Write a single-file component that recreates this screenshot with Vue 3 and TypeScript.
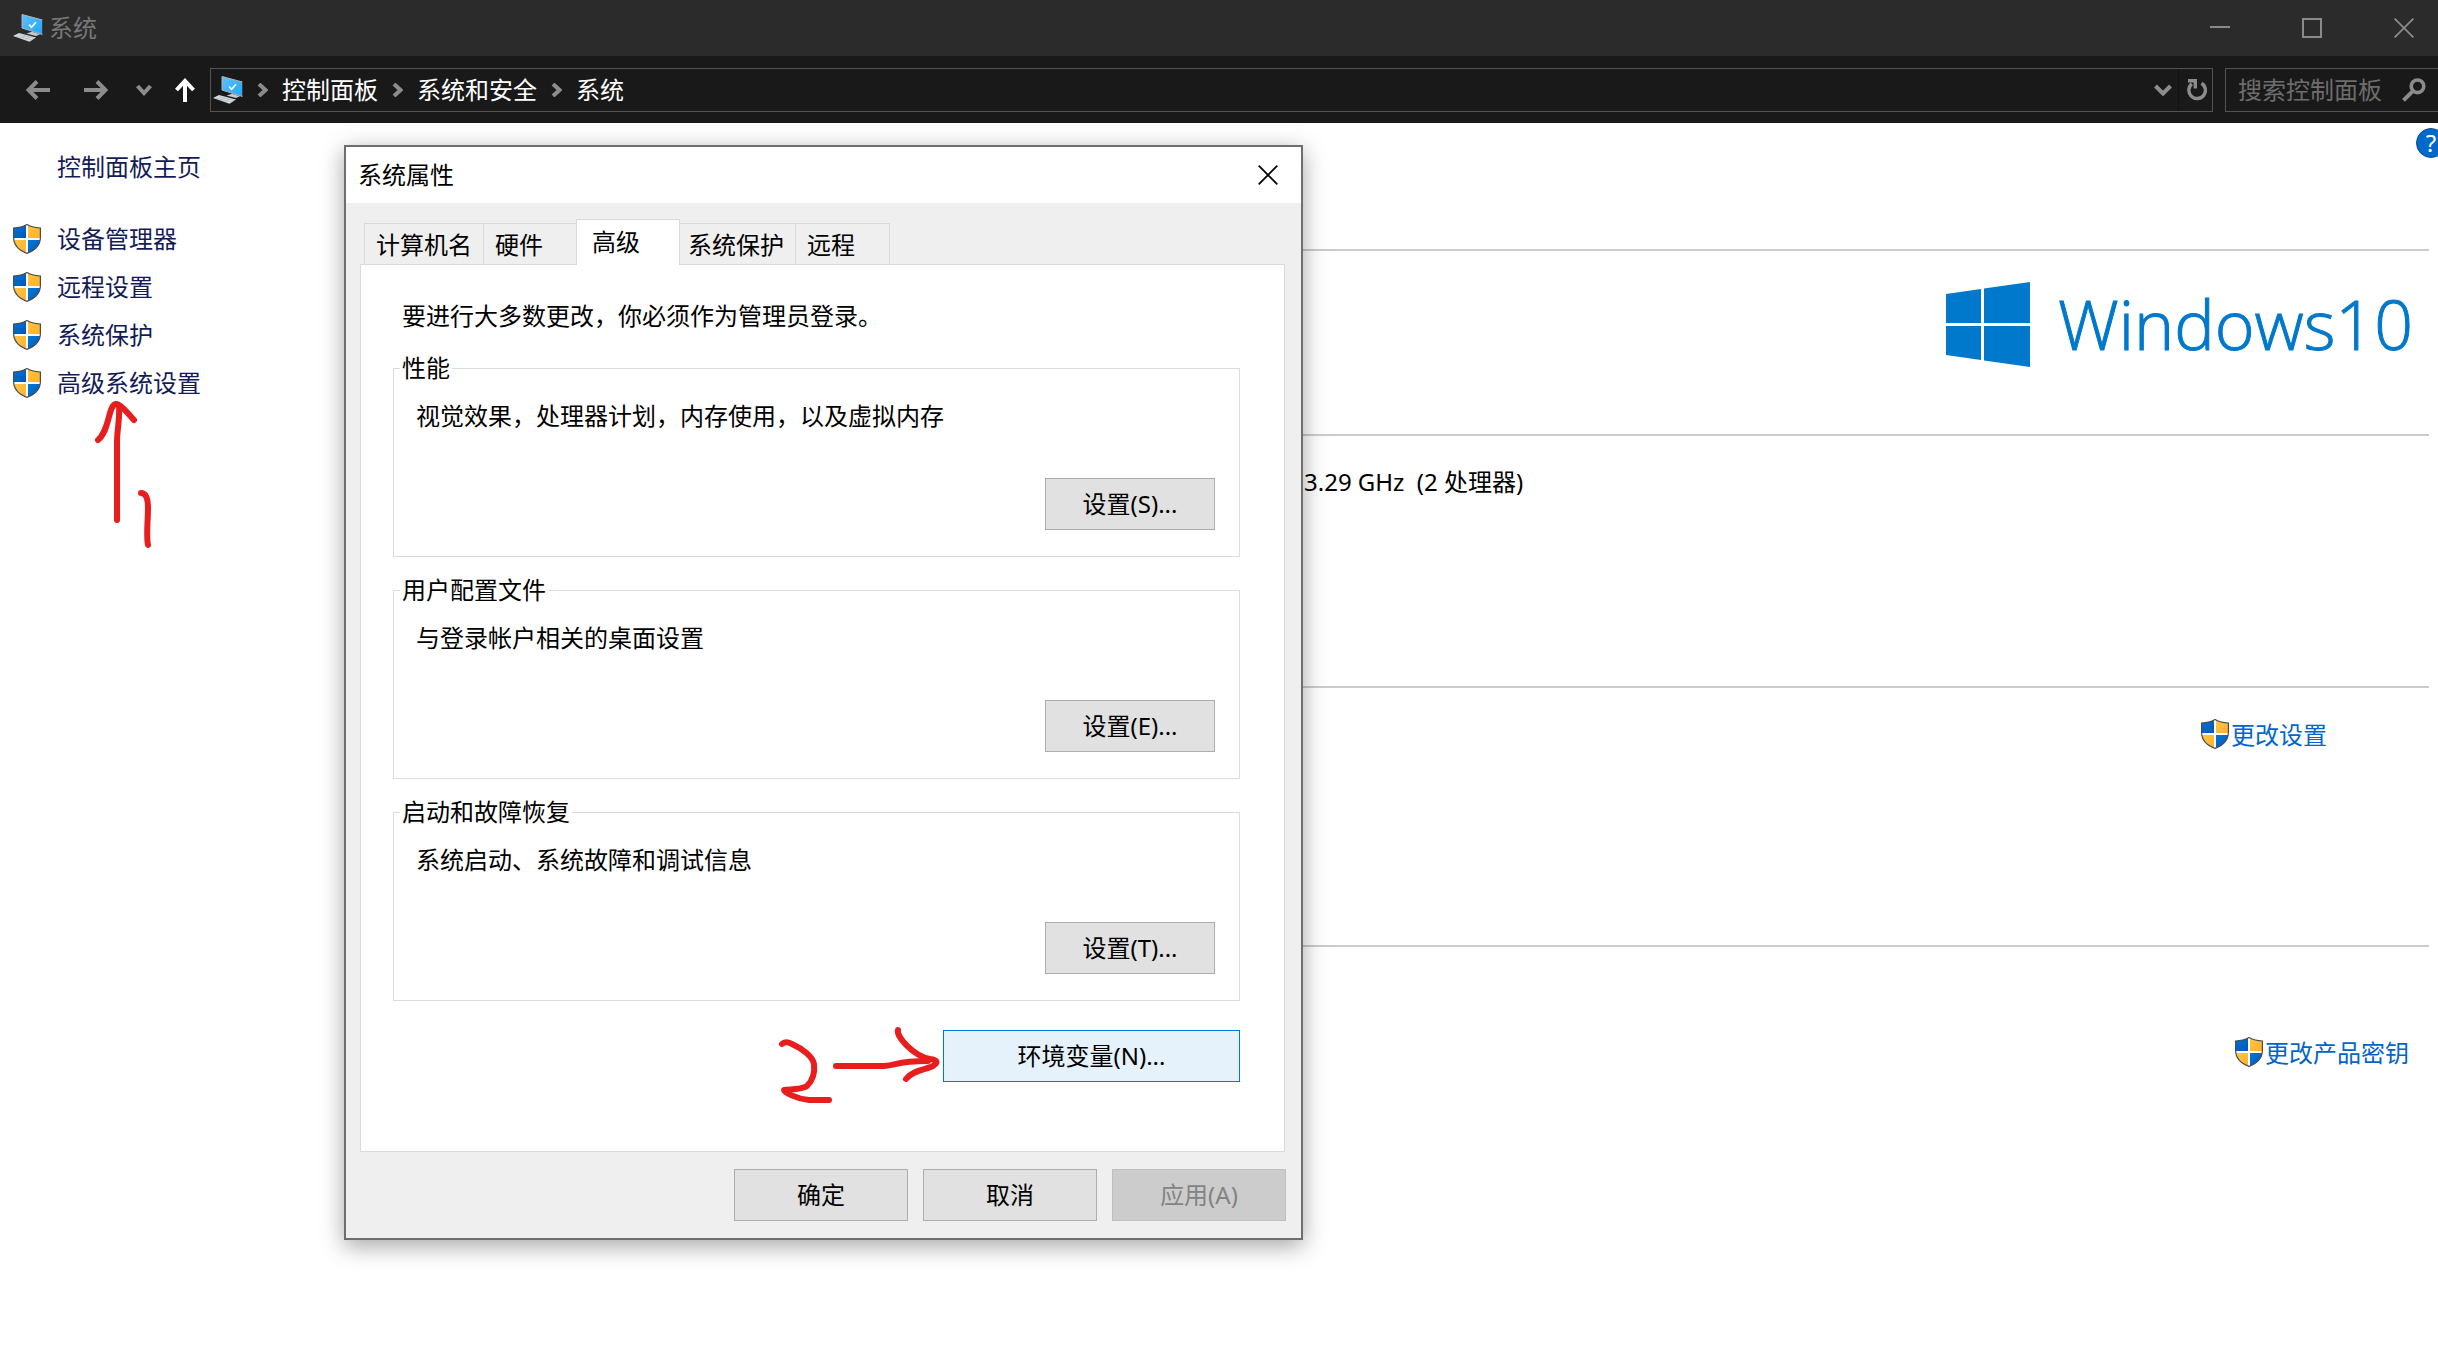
<script setup lang="ts">
import { ref } from 'vue'

interface Tab { id: string; label: string; width: number }
interface Group { legend: string; text: string; button: string }

const crumbs: string[] = ['控制面板', '系统和安全', '系统']
const tasks: string[] = ['设备管理器', '远程设置', '系统保护', '高级系统设置']
const processor = '3.29 GHz  (2 处理器)'
const tabs: Tab[] = [
  { id: 'name', label: '计算机名', width: 119 },
  { id: 'hardware', label: '硬件', width: 93 },
  { id: 'advanced', label: '高级', width: 104 },
  { id: 'protection', label: '系统保护', width: 115 },
  { id: 'remote', label: '远程', width: 95 },
]
const groups: Group[] = [
  { legend: '性能', text: '视觉效果，处理器计划，内存使用，以及虚拟内存', button: '设置(S)...' },
  { legend: '用户配置文件', text: '与登录帐户相关的桌面设置', button: '设置(E)...' },
  { legend: '启动和故障恢复', text: '系统启动、系统故障和调试信息', button: '设置(T)...' },
]
const active = ref<string>('advanced')
const query = ref<string>('')
</script>

<template>
  <div class="window">
    <!-- shared symbols -->
    <svg class="defs" width="0" height="0" aria-hidden="true">
      <defs>
        <linearGradient id="gBlue" x1="0" y1="0" x2="1" y2="1">
          <stop offset="0" stop-color="#0078d7" /><stop offset="1" stop-color="#0055bb" />
        </linearGradient>
        <linearGradient id="gGold" x1="0" y1="0" x2="1" y2="1">
          <stop offset="0" stop-color="#ffc745" /><stop offset="1" stop-color="#ffb02e" />
        </linearGradient>
        <linearGradient id="gScreen" x1="0" y1="0" x2="1" y2="1">
          <stop offset="0" stop-color="#5cc0ff" /><stop offset="1" stop-color="#22a7ff" />
        </linearGradient>
        <clipPath id="shieldClip">
          <path d="M.6 4C5.5 4 10 2.900 14 .6 18 2.900 22.500 4 27.400 4V13C27.400 21 22 26.500 14 29.400 6 26.500.6 21 .6 13Z" />
        </clipPath>
        <symbol id="shield" viewBox="0 0 28 30">
          <g clip-path="url(#shieldClip)">
            <rect width="28" height="30" fill="#fff" />
            <rect width="13" height="14" fill="url(#gBlue)" />
            <rect x="15" width="13" height="14" fill="url(#gGold)" />
            <rect y="16" width="13" height="14" fill="url(#gGold)" />
            <rect x="15" y="16" width="13" height="14" fill="url(#gBlue)" />
          </g>
          <path d="M.6 4C5.500 4 10 2.900 14 .6 18 2.900 22.500 4 27.400 4V13C27.400 21 22 26.500 14 29.400 6 26.500.6 21 .6 13Z" fill="none" stroke="#4a4a4a" stroke-width="1.200" />
        </symbol>
        <symbol id="pc" viewBox="0 0 30 28">
          <path d="M9 .5 29.500 6V20.500L9 14Z" fill="url(#gScreen)" stroke="#b9b2ac" stroke-width="1" />
          <path d="M29.500 6V20.500" stroke="#3d3d3d" stroke-width="1" />
          <path d="M16 10.500 18.500 13.300 23 8.300" fill="none" stroke="#fff" stroke-width="1.600" />
          <path d="M0 22 6 19 23 23.500 16.500 27.800Z" fill="#d5dade" />
          <path d="M3 22.200 19 26M6 20.600 21 24.500M8 24 13 21M12 25.400 17.500 22.300" stroke="#aeb4ba" stroke-width=".6" />
          <path d="M13.500 19.500 19 17.800 27 20.200 23 22Z" fill="#c3ccd3" />
        </symbol>
      </defs>
    </svg>

    <header class="titlebar">
      <svg class="pc"><use href="#pc" /></svg>
      <h1>系统</h1>
      <div class="caption">
        <button type="button" aria-label="最小化"><svg width="20" height="20"><path d="M0 9H20" stroke-width="2" /></svg></button>
        <button type="button" aria-label="最大化"><svg width="20" height="20"><path d="M1 1H19V19H1Z" stroke-width="2" /></svg></button>
        <button type="button" aria-label="关闭"><svg width="20" height="20"><path d="M.5.5 19.500 19.500M19.500.5.5 19.500" stroke-width="1.800" /></svg></button>
      </div>
    </header>

    <nav class="navbar" aria-label="地址栏">
      <div class="history">
        <button type="button" aria-label="后退"><svg width="24" height="20"><path d="M24 10H3M11 1.500 2.500 10 11 18.500" stroke-width="4" /></svg></button>
        <button type="button" class="forward" aria-label="前进"><svg width="24" height="20"><path d="M0 10H21M13 1.500 21.500 10 13 18.500" stroke-width="4" /></svg></button>
        <button type="button" class="recent" aria-label="最近浏览的位置"><svg width="16" height="12"><path d="M1.500 2 8 9 14.500 2" stroke-width="4" /></svg></button>
        <button type="button" class="up" aria-label="上移"><svg width="20" height="24"><path d="M10 24V3M1.500 12 10 3 18.500 12" stroke-width="4" /></svg></button>
      </div>
      <div class="address">
        <svg class="pc"><use href="#pc" /></svg>
        <template v-for="c in crumbs" :key="c">
          <svg class="sep" width="11" height="14"><path d="M2 1 8.500 7 2 13" stroke-width="4" /></svg>
          <a href="#">{{ c }}</a>
        </template>
        <button type="button" class="drop" aria-label="以前的位置"><svg width="18" height="12"><path d="M1.500 2 9 9.500 16.500 2" stroke-width="4" /></svg></button>
        <button type="button" class="refresh" aria-label="刷新">
          <svg width="20" height="22"><path d="M14.500 4.200A8.300 8.300 0 1 1 4.800 4.900" stroke-width="3.400" /><path d="M1 1.700H8.300V9.500" stroke-width="3.400" /></svg>
        </button>
      </div>
      <label class="search">
        <input v-model="query" type="text" placeholder="搜索控制面板" aria-label="搜索控制面板">
        <svg width="24" height="24"><circle cx="15.500" cy="8.300" r="6.300" stroke-width="3.600" /><path d="M11 12.800 1.500 22.300" stroke-width="4" /></svg>
      </label>
    </nav>

    <div class="body">
      <aside class="sidebar">
        <a class="home" href="#">控制面板主页</a>
        <ul>
          <li v-for="t in tasks" :key="t">
            <svg class="shield"><use href="#shield" /></svg>
            <a href="#">{{ t }}</a>
          </li>
        </ul>
      </aside>

      <main class="content">
        <section class="brand">
          <svg class="flag" viewBox="0 0 84 85" aria-hidden="true">
            <path d="M0 12 35 7V41H0ZM38 6.500 84 0V41H38ZM0 44H35V78L0 73ZM38 44H84V85L38 78.500Z" fill="#0078cc" />
          </svg>
          <span>Windows</span><span>10</span>
        </section>
        <section class="spec"><p>{{ processor }}</p></section>
        <section class="change">
          <svg class="shield"><use href="#shield" /></svg><a href="#">更改设置</a>
        </section>
        <section class="key">
          <svg class="shield"><use href="#shield" /></svg><a href="#">更改产品密钥</a>
        </section>
      </main>
      <button type="button" class="help" aria-label="帮助">?</button>
    </div>

    <div class="dialog" role="dialog" aria-labelledby="dlgTitle">
      <div class="dlg-title">
        <h2 id="dlgTitle">系统属性</h2>
        <button type="button" aria-label="关闭"><svg width="20" height="20"><path d="M.7.7 19.300 19.300M19.300.7.7 19.300" stroke-width="1.800" /></svg></button>
      </div>
      <div class="tabs" role="tablist">
        <button
          v-for="t in tabs" :key="t.id" type="button" role="tab"
          :aria-selected="active === t.id" :class="{ active: active === t.id }"
          :style="{ width: t.width + 'px' }" @click="active = t.id"
        >{{ t.label }}</button>
      </div>
      <div class="panel" role="tabpanel">
        <p class="intro">要进行大多数更改，你必须作为管理员登录。</p>
        <fieldset v-for="g in groups" :key="g.legend">
          <legend>{{ g.legend }}</legend>
          <p>{{ g.text }}</p>
          <button type="button" class="btn">{{ g.button }}</button>
        </fieldset>
        <button type="button" class="btn env">环境变量(N)...</button>
      </div>
      <div class="actions">
        <button type="button" class="btn">确定</button>
        <button type="button" class="btn">取消</button>
        <button type="button" class="btn" disabled>应用(A)</button>
      </div>
    </div>

    <!-- red pen marks -->
    <svg class="ink ink-one" viewBox="0 0 60 150" role="img" aria-label="1">
      <path d="M8 40C20 30 18 5 26 4 30 4 36 11 44 20" />
      <path d="M29 6C30 20 27 30 27 42V120" />
      <path d="M51 93C56 93 58 98 58 108 58 122 56 135 58 145" />
    </svg>
    <svg class="ink ink-two" viewBox="0 0 170 90" role="img" aria-label="2">
      <path d="M6 20C8 18 12 18 16 20 27 25 37 33 38 40 39 48 37 56 31 62 25 66 14 65 8 66 8 68 20 75 33 76H53" />
      <path d="M60 42H108C122 41 120 37 152 37" />
      <path d="M122 6C120 12 137 32 154 35 161 36 163 38 157 42 149 46 137 46 130 55" />
    </svg>
  </div>
</template>

<style>
html, body { background: #fff; }
</style>

<style scoped>
* { box-sizing: border-box; }
h1, h2, p, ul { margin: 0; padding: 0; font-weight: 400; }
ul { list-style: none; }
a { text-decoration: none; }
button { margin: 0; padding: 0; border: 0; background: none; color: inherit; font: inherit; }
svg { flex: none; display: block; }
.defs { position: absolute; }
.window {
  position: relative; display: flex; flex-direction: column; min-height: 100vh; overflow: hidden;
  font: 24px/32px "Noto Sans", "Noto Sans CJK SC", sans-serif; color: #000; background: #fff;
}
.pc { width: 30px; height: 28px; }
.shield { width: 28px; height: 30px; }

.titlebar { display: flex; align-items: center; height: 56px; padding-left: 13px; background: #2b2b2b; color: #777; }
.titlebar h1 { font-size: 24px; margin-left: 6px; }
.caption { display: flex; margin-left: auto; gap: 24px; }
.caption button { display: flex; align-items: center; justify-content: center; width: 68px; height: 54px; }
.caption svg { fill: none; stroke: #8a8a8a; }

.navbar { display: flex; align-items: center; height: 67px; background: #191919; color: #fff; }
.navbar svg { fill: none; stroke: #8c8c8c; }
.history { display: flex; align-items: center; width: 210px; padding-left: 26px; }
.forward { margin-left: 34px; }
.recent { margin-left: 28px; }
.up { margin-left: 23px; }
.history .up svg { stroke: #fff; }
.address { display: flex; align-items: center; flex: 1; height: 44px; padding-left: 2px; border: 1px solid #535353; }
.address .pc { stroke: none; }
.address a { color: #fff; }
.sep { margin: 0 14px; }
.drop { margin-left: auto; margin-right: 6px; }
.refresh { display: flex; align-items: center; height: 42px; padding: 0 5px 0 8px; border-left: 1px solid #111; }
.search { display: flex; align-items: center; width: 214px; height: 44px; margin-left: 12px; margin-right: -1px; padding: 0 12px; border: 1px solid #535353; }
.search input { flex: 1; min-width: 0; height: 40px; padding: 0; border: 0; outline: 0; background: none; color: #fff; font: inherit; }
.search input::placeholder { color: #6d6d6d; opacity: 1; }

.body { position: relative; display: flex; flex: 1; }
.sidebar { width: 344px; padding: 28px 13px; }
.sidebar a { color: #151c55; }
.home { display: block; margin-left: 44px; }
.sidebar ul { display: flex; flex-direction: column; gap: 16px; margin-top: 40px; }
.sidebar li { display: flex; align-items: center; gap: 16px; height: 32px; }
.content { flex: 1; margin-right: 9px; padding-top: 126px; }
.content section { display: flex; border-top: 2px solid #ccc; }
.content a { color: #0066cc; }
.brand {
  height: 185px; justify-content: flex-end; padding: 31px 16px 0 0; color: #0078cc;
  font: 300 68px/84px "Open Sans", "Noto Sans", sans-serif; -webkit-text-stroke: 1px #0078cc;
}
.flag { width: 84px; height: 85px; margin-right: 28px; }
.spec { height: 252px; padding: 30px 0 0 960px; white-space: pre; }
.change, .key { justify-content: flex-end; align-items: flex-start; gap: 2px; }
.change { height: 259px; padding: 31px 102px 0 0; }
.key { padding: 90px 20px 0 0; }
.help {
  position: absolute; top: 5px; right: -8px; width: 30px; height: 30px; border: 1px solid #0a4f8f;
  border-radius: 50%; background: #0069cc; color: #fff; line-height: 28px; text-align: center;
}

.dialog {
  position: absolute; top: 145px; left: 344px; width: 959px; border: 2px solid #6e6e6e;
  background: #efefef; box-shadow: 0 6px 22px rgba(0, 0, 0, .36);
}
.dlg-title { display: flex; align-items: center; justify-content: space-between; height: 56px; padding: 0 23px 0 12px; background: #fff; }
.dlg-title h2 { font-size: 24px; }
.dlg-title svg { fill: none; stroke: #000; }
.tabs { display: flex; align-items: flex-end; height: 61px; padding-left: 18px; }
.tabs button { height: 41px; padding: 2px 0 0 11px; border: 1px solid #d9d9d9; border-width: 1px 0 0 1px; text-align: left; }
.tabs button:last-child { border-right-width: 1px; }
.tabs .active { z-index: 1; height: 46px; margin-bottom: -1px; padding: 0 0 2px 15px; border-right-width: 1px; background: #fff; }
.tabs .active + button { border-left-width: 0; padding-left: 8px; }
.panel { display: flex; flex-direction: column; gap: 17px; margin: 0 16px 0 14px; padding: 35px 44px 69px 32px; border: 1px solid #d9d9d9; background: #fff; }
.intro { margin: 0 0 3px 9px; }
fieldset { display: flex; flex-direction: column; min-width: 0; margin: 0; padding: 16px 24px 26px 6px; border: 1px solid #dcdcdc; }
legend { padding: 0 2px; }
fieldset p { margin: 0 0 46px 16px; }
.btn { width: 174px; height: 52px; border: 1px solid #adadad; background: #e1e1e1; text-align: center; }
fieldset .btn { width: 170px; align-self: flex-end; }
.btn.env { width: 297px; align-self: flex-end; margin-top: 12px; border-color: #0078d7; background: #e5f1fb; }
.btn:disabled { border-color: #bfbfbf; background: #ccc; color: #838383; }
.actions { display: flex; justify-content: flex-end; gap: 15px; padding: 17px 15px; }

.ink { position: absolute; fill: none; stroke: #e81e1e; stroke-width: 6; stroke-linecap: round; stroke-linejoin: round; overflow: visible; pointer-events: none; }
.ink-one { left: 90px; top: 400px; width: 60px; height: 150px; }
.ink-two { left: 776px; top: 1024px; width: 170px; height: 90px; }
</style>
